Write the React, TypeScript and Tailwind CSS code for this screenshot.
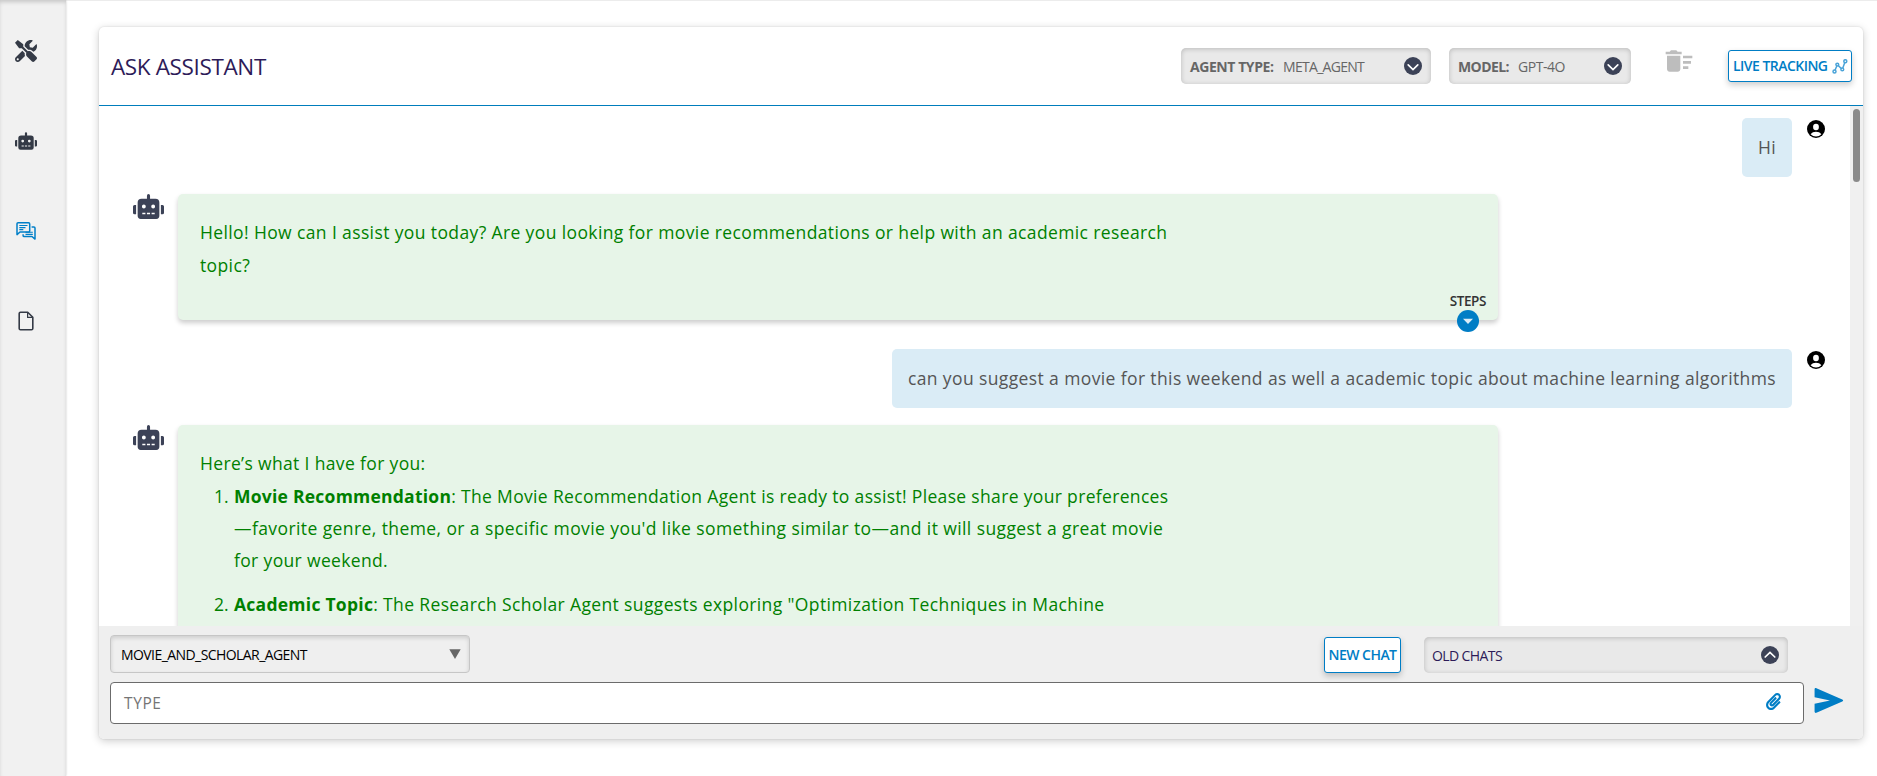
import type { ReactNode } from "react";
import { FaPaperclip, FaRobot, FaTools } from "react-icons/fa";
import { MdDeleteSweep } from "react-icons/md";

function ChatIcon() {
  return (
    <svg viewBox="0 0 20 18" className="h-[18px] w-5" fill="none" stroke="#007fc8" strokeWidth="1.5" strokeLinejoin="round">
      <path d="M2 .8h10.6c.7 0 1.1.4 1.1 1.1v7c0 .7-.4 1.1-1.1 1.1H4L1 12.6V1.8C1 1.2 1.3.8 2 .8z" />
      <path d="M3.3 3.5h8.2M3.3 5.6h6.2M3.3 7.6h4" strokeWidth="1.1" />
      <path d="M15.6 5h2.3c.7 0 1.1.4 1.1 1.1v11L16 14.500H8.200c-.7 0-1.100-.4-1.100-1.100V12.200" />
      <path d="M9.500 10.300h7.300M9.500 12.400h7.300" strokeWidth="1.100" />
    </svg>
  );
}

function FileIcon() {
  return (
    <svg viewBox="0 0 16 20" className="h-5 w-4" fill="none" stroke="#343a46" strokeWidth="1.600" strokeLinejoin="round">
      <path d="M2.500 1.200h7.200L14.800 6.300v11.200c0 .8-.5 1.300-1.300 1.300h-11c-.8 0-1.300-.5-1.300-1.300v-15c0-.8.5-1.300 1.300-1.300z" />
      <path d="M9.600 1.400v5h5" strokeWidth="1.200" />
    </svg>
  );
}

function TrackingIcon() {
  return (
    <svg viewBox="0 0 16 15" className="h-[15px] w-4" fill="none" stroke="#4aa3d8" strokeWidth="1.500">
      <circle cx="2.500" cy="12.600" r="1.500" />
      <circle cx="5.300" cy="5.600" r="1.400" />
      <circle cx="10.300" cy="10.400" r="1.400" />
      <circle cx="13.300" cy="2.200" r="1.500" />
      <path d="M3 11.200 4.800 7M6.300 6.600l3 2.900M10.800 9l2-5.400" />
    </svg>
  );
}

function UserIcon() {
  return (
    <svg viewBox="0 0 18 18" className="size-[18px] shrink-0">
      <circle cx="9" cy="9" r="9" fill="#000" />
      <ellipse cx="9" cy="7" rx="2.900" ry="3.200" fill="#fff" />
      <path d="M3.600 14.200c1.200-1.700 3.200-2.500 5.400-2.500s4.200.8 5.400 2.500A7.500 7.500 0 0 1 9 16.600a7.500 7.500 0 0 1-5.400-2.400z" fill="#fff" />
    </svg>
  );
}

function ChevronDisc({ up = false }: { up?: boolean }) {
  return (
    <svg viewBox="0 0 18 18" className="size-[18px] shrink-0">
      <circle cx="9" cy="9" r="9" fill="#3c4257" />
      <path d={up ? "M4.200 11 9 6.400l4.800 4.600" : "M4.200 7.900 9 12.500l4.800-4.600"} fill="none" stroke="#fff" strokeWidth="1.700" strokeLinecap="round" />
    </svg>
  );
}

function Sidebar() {
  return (
    <nav className="flex w-[66px] shrink-0 flex-col bg-[#f1f1f1] pr-3.5 shadow-[inset_0_3px_4px_-1px_rgba(0,0,0,0.18),0_0_2px_rgba(0,0,0,0.22)]">
      <a className="mt-10 flex h-[22px] justify-center"><FaTools className="size-[22px] text-[#343a46]" /></a>
      <a className="mt-[68px] flex h-[22px] items-center justify-center"><FaRobot className="h-[18px] w-[22px] text-[#343a46]" /></a>
      <a className="mt-[70px] flex h-[18px] justify-center"><ChatIcon /></a>
      <a className="mt-[71px] flex h-5 justify-center"><FileIcon /></a>
    </nav>
  );
}

const inset = "rounded-[5px] bg-[#e9e9e9] shadow-[inset_0_1px_5px_rgba(0,0,0,0.2)]";

function Header() {
  return (
    <header className="flex h-[79px] shrink-0 items-start border-b border-[#007dbc]">
      <h1 className="ml-3 mt-[25px] text-[22.500px] leading-[30px] tracking-[-0.360px] text-[#2d1b58]">ASK ASSISTANT</h1>
      <div className={`ml-auto mt-[21px] flex h-9 w-[250px] items-center pl-[9px] pr-[9px] text-[14px] text-[#666] ${inset}`}>
        <b className="w-[93px] whitespace-nowrap pt-px font-bold leading-5 tracking-[-0.430px]">AGENT TYPE:</b>
        <span className="flex-1 pt-px leading-5 tracking-[-0.700px]">META_AGENT</span>
        <ChevronDisc />
      </div>
      <div className={`ml-[18px] mt-[21px] flex h-9 w-[182px] items-center pl-[9px] pr-[9px] text-[14px] text-[#666] ${inset}`}>
        <b className="w-[60px] whitespace-nowrap pt-px font-bold leading-5 tracking-[-0.600px]">MODEL:</b>
        <span className="flex-1 pt-px leading-5 tracking-[-0.450px]">GPT-4O</span>
        <ChevronDisc />
      </div>
      <MdDeleteSweep className="ml-8 mt-[18px] size-8 text-[#bdbdbd]" />
      <button className="ml-[33px] mr-[11px] mt-[23px] flex h-8 w-[124px] items-center justify-between rounded-[3px] border border-[#007dc5] bg-white pl-1 pr-[3px] text-[14px] font-semibold tracking-[-0.530px] text-[#007dc5] shadow-[0_3px_6px_rgba(0,0,0,0.2)]">
        <span className="whitespace-nowrap leading-5">LIVE TRACKING</span>
        <TrackingIcon />
      </button>
    </header>
  );
}

function UserMessage({ children }: { children: ReactNode }) {
  return (
    <div className="flex justify-end pr-[25px]">
      <div className="flex h-[59px] items-center whitespace-nowrap rounded-[5px] bg-[#daecf6] px-4 tracking-[0.386px] text-[#555]">{children}</div>
      <div className="ml-[15px] mt-0.5"><UserIcon /></div>
    </div>
  );
}

function BotMessage({ children, className, steps = false }: { children: ReactNode; className: string; steps?: boolean }) {
  return (
    <div className="mt-[17px] flex pl-[34px]">
      <FaRobot className="h-[25px] w-[31px] shrink-0 text-[#3c4257]" />
      <div className={`relative ml-3.5 w-[1320px] whitespace-nowrap rounded-[5px] bg-[#e7f5e8] pl-[22px] pt-[21.500px] leading-[33px] text-[#008000] shadow-[0_3px_5px_rgba(0,0,0,0.2)] ${className}`}>
        {children}
        {steps && (
          <div className="absolute -bottom-3 right-3 flex flex-col items-center">
            <span className="text-[13.500px] font-semibold leading-[18px] tracking-[-0.400px] text-[#333]">STEPS</span>
            <svg viewBox="0 0 22 22" className="size-[22px]">
              <circle cx="11" cy="11" r="11" fill="#007dc5" />
              <path d="M6 8.700h10l-5 5.300z" fill="#dcecf6" />
            </svg>
          </div>
        )}
      </div>
    </div>
  );
}

function ListItem({ n, children }: { n: number; children: ReactNode }) {
  return (
    <li className="mb-3 flex leading-8">
      <span className="w-[34px] pl-[14px]">{n}.</span>
      <p>{children}</p>
    </li>
  );
}

function Conversation() {
  return (
    <section className="flex h-[520px] shrink-0">
      <div className="h-full flex-1 overflow-hidden pt-3 text-[17.500px]">
        <UserMessage>Hi</UserMessage>
        <BotMessage className="h-[126px]" steps>
          <p className="tracking-[0.380px]">
            Hello! How can I assist you today? Are you looking for movie recommendations or help with an academic research
            <br />
            topic?
          </p>
        </BotMessage>
        <div className="mt-[29px]">
          <UserMessage>can you suggest a movie for this weekend as well a academic topic about machine learning algorithms</UserMessage>
        </div>
        <BotMessage className="h-[300px]">
          <p className="tracking-[0.350px]">Here’s what I have for you:</p>
          <ol>
            <ListItem n={1}>
              <b className="tracking-[0.240px]">Movie Recommendation</b>
              <span className="tracking-[0.335px]">: The Movie Recommendation Agent is ready to assist! Please share your preferences</span>
              <br />
              <span className="tracking-[0.410px]">—favorite genre, theme, or a specific movie you'd like something similar to—and it will suggest a great movie</span>
              <br />
              <span className="tracking-[0.350px]">for your weekend.</span>
            </ListItem>
            <ListItem n={2}>
              <b className="tracking-[0.260px]">Academic Topic</b>
              <span className="tracking-[0.370px]">: The Research Scholar Agent suggests exploring "Optimization Techniques in Machine</span>
            </ListItem>
          </ol>
        </BotMessage>
      </div>
      <div className="w-[13px] bg-[#f0f0f0] pl-[3px] pt-[3px]">
        <div className="h-[73px] w-[7px] rounded-full bg-[#8a8a8a]" />
      </div>
    </section>
  );
}

function Composer() {
  return (
    <footer className="flex-1 rounded-b-[5px] bg-[#efefef] px-[11px] pt-[9px]">
      <div className="flex items-center">
        <div className="flex h-[38px] w-[360px] items-center justify-between rounded-[4px] border border-[#c6c6c6] pl-2.5 pr-2 text-[14px] tracking-[-0.570px] text-black shadow-[inset_0_2px_4px_rgba(0,0,0,0.14)]">
          <span className="pt-0.5 leading-5">MOVIE_AND_SCHOLAR_AGENT</span>
          <svg viewBox="0 0 12 10" className="h-2.5 w-3"><path d="M.3.200h11.400L6 10z" fill="#666" /></svg>
        </div>
        <button className="ml-auto mt-0.5 flex h-9 w-[77px] items-center justify-center whitespace-nowrap rounded-[3px] border border-[#007dc5] bg-white pb-0.5 text-[14px] font-semibold tracking-[-0.530px] text-[#007dc5] shadow-[0_3px_6px_rgba(0,0,0,0.22)]">NEW CHAT</button>
        <div className={`ml-[23px] mr-16 mt-0.5 flex h-9 w-[364px] items-center justify-between pl-2 pr-[9px] text-[14px] tracking-[-0.600px] text-[#2d1b58] ${inset}`}>
          <span className="pt-0.5 leading-5">OLD CHATS</span>
          <ChevronDisc up />
        </div>
      </div>
      <div className="mt-[9px] flex">
        <div className="flex h-[42px] w-[1694px] items-center justify-between rounded-[4px] border border-[#6b6b6b] bg-white pl-[13px] pr-[22px]">
          <span className="text-[15.500px] leading-5 tracking-[0.600px] text-[#757575]">TYPE</span>
          <FaPaperclip className="-mt-1 h-[17px] w-[15px] text-[#007dc5]" />
        </div>
        <svg viewBox="0 0 30 26" className="ml-2.5 mt-1.5 h-[25px] w-[30px]">
          <path d="M0 1.500C0 .4.900-.200 1.900.200L28.800 12c1.200.5 1.200 1.500 0 2L1.900 25.800C.9 26.200 0 25.600 0 24.500V16.500L16 13 0 9.500z" fill="#007dc5" />
        </svg>
      </div>
    </footer>
  );
}

export default function App() {
  return (
    <div className="flex h-[776px] w-[1877px] overflow-hidden bg-white font-['Open_Sans',sans-serif] shadow-[inset_0_1px_0_#ececec]">
      <Sidebar />
      <main className="ml-[33px] mt-[27px] flex h-[712px] w-[1764px] flex-col rounded-[5px] bg-white shadow-[0_0_2px_rgba(0,0,0,0.12),0_2px_8px_rgba(0,0,0,0.2)]">
        <Header />
        <Conversation />
        <Composer />
      </main>
    </div>
  );
}
